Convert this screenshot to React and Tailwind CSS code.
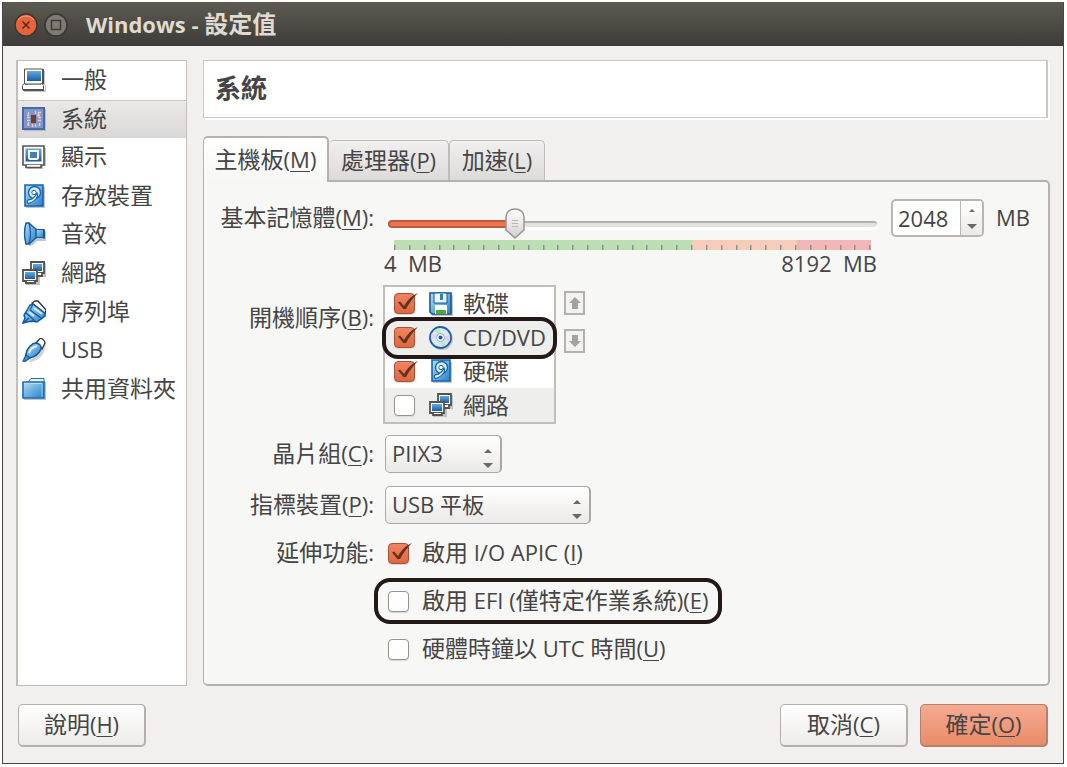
import React, { useState } from 'react';

const MIN_MEMORY = 4;
const MAX_MEMORY = 8192;

const ComputerIcon = () => (
  <svg className="h-6 w-6 shrink-0" viewBox="0 0 24 24" fill="none">
    <path d="M4 3h19v14h1v7H2v-2H23v-5h-1z" fill="#c4c4c4" />
    <path d="M2.500 1h18v15h-18z" fill="#fff" stroke="#55534f" />
    <path d="M21 1v15" stroke="#55534f" strokeWidth="2" />
    <path d="M5 3h14v10H5z" fill="url(#screenBlue)" />
    <path d="M2 15.500l-1.500 2v4h21v-4l-1.500-2-2 1H4z" fill="#fff" stroke="#55534f" />
    <path d="M1 22h21" stroke="#55534f" strokeWidth="2" />
    <path d="M5 16.500h13" stroke="#8a8883" />
  </svg>
);

const ChipIcon = () => (
  <svg className="h-6 w-6 shrink-0" viewBox="0 0 24 24" fill="none">
    <path d="M2 2h22v22H2z" fill="#b9bcc4" />
    <path d="M1 1h21v21H1z" fill="#7f97c9" stroke="#4869a5" strokeWidth="2" />
    <path d="M9 8h5v8H9z" fill="#6b4136" />
    <path
      d="M6.500 5v4M5 10.500h3M5 13.500h3M6.500 15v4M16.500 5v3M16 10.500h3M16 13.500h3M17.500 16v3M10.500 17v3M13.500 17v3M13.500 4v3M19 5.500h-3M5 8.500h2M15 8.500h3M5 17.500h2"
      stroke="#f0c9c4"
      strokeWidth="1.400"
    />
  </svg>
);

const DisplayIcon = () => (
  <svg className="h-6 w-6 shrink-0" viewBox="0 0 24 24" fill="none">
    <path d="M3 3h21v18h-3v3H5z" fill="#c4c4c4" />
    <path d="M1 1h21v19H1z" fill="#fff" stroke="#55534f" strokeWidth="1.600" />
    <path d="M3.500 3.500h16v13h-16z" fill="url(#screenBlue)" />
    <path d="M7 6h9v7l-1 1H8l-1-1z" fill="#3f7fc0" stroke="#fff" strokeWidth="2" />
    <path d="M4 20v2.500h15V20" fill="#fff" stroke="#55534f" strokeWidth="1.600" />
  </svg>
);

const DiskIcon = () => (
  <svg className="h-6 w-6 shrink-0" viewBox="0 0 24 24" fill="none">
    <path d="M4 3h19v21H4z" fill="#c4c4c4" />
    <path d="M3 1h18v21H3z" fill="url(#skyBlue)" stroke="#1464ae" strokeWidth="1.600" />
    <circle cx="12.500" cy="8.500" r="6" fill="#d9ecf9" stroke="#1464ae" strokeWidth="1.400" />
    <path d="M15 9c2 4-2 8-7 10-2 1-4-1-2-3 2-1 4 0 5-2 2-1 3-3 4-5z" fill="#e8f4fc" stroke="#1464ae" strokeWidth="1.200" />
    <circle cx="12" cy="8.500" r="2.200" fill="#fff" stroke="#1464ae" />
  </svg>
);

const SoundIcon = () => (
  <svg className="h-6 w-6 shrink-0" viewBox="0 0 24 24" fill="none">
    <path d="M5 3c5 1 7 6 9 6h10v10h-9c-3 3-5 5-8 5z" fill="#c4c4c4" />
    <path d="M13 7.500h9v8h-9z" fill="url(#skyBlue)" stroke="#14579c" />
    <path d="M22 7.500v9" stroke="#14579c" strokeWidth="2" />
    <path d="M4 1h3c2 2 4 4 7 6v9c-3 2-5 5-7 6H4c-2-7-2-14 0-21z" fill="url(#skyBlue)" stroke="#14579c" strokeWidth="1.400" />
    <path d="M7 1c2 7 2 14 0 21" stroke="#14579c" strokeWidth="1.200" />
  </svg>
);

const NetworkIcon = () => (
  <svg className="h-6 w-6 shrink-0" viewBox="0 0 24 24" fill="none">
    <path d="M10 2h14v14h-6v8H4v-3z" fill="#c4c4c4" />
    <path d="M9 1h13v11H9z" fill="#fff" stroke="#55534f" strokeWidth="1.800" />
    <path d="M11 3h9v7h-9z" fill="url(#screenBlue)" />
    <path d="M14 12v3h6v-3" fill="#fff" stroke="#55534f" strokeWidth="1.800" />
    <path d="M1 9h14v11H1z" fill="#fff" stroke="#55534f" strokeWidth="1.800" />
    <path d="M3 11h10v7H3z" fill="url(#screenBlue)" />
    <path d="M4 20v2h9v-2" fill="#fff" stroke="#55534f" strokeWidth="1.800" />
  </svg>
);

const SerialIcon = () => (
  <svg className="h-6 w-6 shrink-0" viewBox="0 0 24 24" fill="none">
    <path d="M8 24l16-10v-3l-8-8z" fill="#c4c4c4" />
    <path d="M10 3l3-2h3l8 9-1 4z" fill="#fff" stroke="#333" strokeWidth="1.300" />
    <path d="M4 12l4-7 3-1 12 9v3l-8 6-5-1-5 1-4 1 2-5-1-3z" fill="url(#skyBlue)" stroke="#14579c" strokeWidth="1.500" />
    <path d="M4 13l9 8M11 4l-3 6 11 8" stroke="#14579c" strokeWidth="1.200" />
    <path d="M12 8l8 6M7 12l5 4" stroke="#d6edfa" strokeWidth="2" />
    <path d="M1 23l6-5" stroke="#14579c" strokeWidth="1.500" />
  </svg>
);

const UsbIcon = () => (
  <svg className="h-6 w-6 shrink-0" viewBox="0 0 24 24" fill="none">
    <path d="M6 24c8 0 14-5 16-10l2-8z" fill="#d2d2d2" />
    <path d="M14 5l4-4.500c2-.500 5 2 5 4.500l-3 6z" fill="#fff" stroke="#333" strokeWidth="1.300" />
    <path d="M4 16C5 10 10 5 14 5c3 0 6 3 5 6-2 5-6 8-12 9l-3-1z" fill="url(#skyBlue)" stroke="#14579c" strokeWidth="1.500" />
    <path d="M4 17l-3 6 2 .500L8 20z" fill="#3e96d8" stroke="#14579c" strokeWidth="1.200" />
    <path d="M7 15c1-4 4-6 8-7" stroke="#e3f3fc" strokeWidth="2" />
  </svg>
);

const FolderIcon = () => (
  <svg className="h-6 w-6 shrink-0" viewBox="0 0 24 24" fill="none">
    <path d="M2 5h22v18H2z" fill="#c4c4c4" />
    <path d="M6 5l3-3.500h13v4H6z" fill="#e6f2fa" stroke="#1d6cb0" />
    <path d="M1 5h21v16H1z" fill="url(#skyBlue)" stroke="#1d6cb0" strokeWidth="1.600" />
    <path d="M20 7v13" stroke="#8ccbee" />
    <path d="M2 6.500h18" stroke="#b5dff5" />
  </svg>
);

const FloppyIcon = () => (
  <svg className="h-6 w-6 shrink-0" viewBox="0 0 24 24" fill="none">
    <path d="M2 3h22v21H3z" fill="#c4c4c4" />
    <path d="M1 1h21v21H3l-2-2z" fill="url(#skyBlue)" stroke="#14579c" strokeWidth="1.600" />
    <path d="M5 1h13v10H5z" fill="#eef5fa" stroke="#14579c" />
    <path d="M11 2h3v6h-3z" fill="#2f7fc4" />
    <path d="M6 13h12v9H6z" fill="#fff" />
    <path d="M7 18h10v4H7z" fill="#4aa83c" />
  </svg>
);

const DiscIcon = () => (
  <svg className="h-6 w-6 shrink-0" viewBox="0 0 24 24" fill="none">
    <circle cx="13" cy="13" r="11" fill="#c4c4c4" />
    <circle cx="11.500" cy="11.500" r="10.500" fill="#dbe8f6" stroke="#1d5fa8" strokeWidth="1.800" />
    <path d="M11.500 11.500L5 4.500a9.500 9.500 0 016-2.500z" fill="#bfe6c4" />
    <path d="M11.500 11.500l6.500 7a9.500 9.500 0 01-6 2.500z" fill="#c3e5cd" />
    <path d="M11.500 11.500L21 9a9.500 9.500 0 01-1 7z" fill="#e6cdea" />
    <path d="M11.500 11.500L2 13a9.500 9.500 0 011-6z" fill="#e8d3ec" />
    <circle cx="11.500" cy="11.500" r="4" fill="#fff" stroke="#7fb2df" />
    <circle cx="11.500" cy="11.500" r="2" fill="#14579c" />
  </svg>
);

const IconGradients = () => (
  <svg className="absolute h-0 w-0" aria-hidden="true">
    <defs>
      <linearGradient id="screenBlue" x1="0" y1="0" x2="0" y2="1">
        <stop offset="0" stopColor="#5fabdf" />
        <stop offset="1" stopColor="#1c5ba6" />
      </linearGradient>
      <linearGradient id="skyBlue" x1="0" y1="0" x2="1" y2="1">
        <stop offset="0" stopColor="#b4def5" />
        <stop offset="1" stopColor="#2580cc" />
      </linearGradient>
      <linearGradient id="knob" x1="0" y1="0" x2="0" y2="1">
        <stop offset="0" stopColor="#ffffff" />
        <stop offset="1" stopColor="#d2d0cd" />
      </linearGradient>
    </defs>
  </svg>
);

// Han characters are set one pixel larger than the Latin text beside them
const Mixed = ({ text }) =>
  text.split(/([\u3400-\u9fff]+)/).map((run, i) =>
    i % 2 ? (
      <span key={i} className="text-[23px]">
        {run}
      </span>
    ) : (
      run
    )
  );

// Label text followed by its keyboard shortcut, e.g. 主機板(M)
const Mnemonic = ({ text, keyName, suffix = '' }) => (
  <span className="block pb-[2px]">
    <Mixed text={text} />(<u className="decoration-1 underline-offset-[3px]">{keyName}</u>){suffix}
  </span>
);

const Highlight = ({ className }) => (
  <span className={`pointer-events-none absolute rounded-2xl border-4 border-[#231a18] ${className}`} />
);

const CheckBox = ({ defaultChecked }) => (
  <span className="relative h-[21px] w-[21px] shrink-0">
    <input
      type="checkbox"
      defaultChecked={defaultChecked}
      className="peer block h-[21px] w-[21px] appearance-none rounded-[4px] border border-[#98938e] bg-white shadow-[0_1px_1px_#d9d7d5] checked:border-[#a5513a] checked:bg-linear-to-b checked:from-[#ee8461] checked:to-[#e0673f]"
    />
    <svg className="pointer-events-none absolute -top-px left-0 hidden h-[22px] w-6 peer-checked:block" viewBox="0 0 24 22" fill="none">
      <path d="M4 10.500l2-1 4 4.500C13 9 17 4 24 1c-5 5-9 10-12 16h-2.500z" fill="#66301f" />
    </svg>
  </span>
);

const SpinArrows = () => (
  <svg className="pointer-events-none absolute right-2 bottom-[5px] h-5 w-3" viewBox="0 0 12 20">
    <path d="M2 5l4-4 4 4zM1 15h10l-5 5z" fill="#6b6966" />
  </svg>
);

const Select = ({ id, width, options }) => (
  <span className={`relative ${width}`}>
    <select
      id={id}
      className="block h-[38px] w-full appearance-none rounded-[5px] border border-r-2 border-[#aba7a2] bg-linear-to-b from-white to-[#ebe9e7] pb-[3px] pl-[6px]"
    >
      {options.map((option) => (
        <option key={option}>{option}</option>
      ))}
    </select>
    <SpinArrows />
  </span>
);

const MemorySlider = ({ value, onChange }) => {
  const ratio = (value - MIN_MEMORY) / (MAX_MEMORY - MIN_MEMORY);
  const position = `calc(10px + (100% - 20px) * ${ratio})`;
  const ticks = Array.from({ length: 33 }, (_, i) => i);

  return (
    <div className="flex-1 pt-[9px]">
      <div className="relative ml-1 h-8">
        <div className="flex h-8 items-center">
          <div className="h-[6px] flex-1 rounded-full border-t-2 border-[#b3afac] bg-[#e5e1df] shadow-[0_3px_0_#fff]" />
        </div>
        <div
          className="absolute top-3 left-0 h-2 rounded-full border-2 border-[#c05a3a] bg-[#ea7550]"
          style={{ width: position }}
        />
        <input
          id="memory"
          type="range"
          min={MIN_MEMORY}
          max={MAX_MEMORY}
          value={value}
          onChange={(e) => onChange(Number(e.target.value))}
          className="absolute inset-0 w-full appearance-none bg-transparent [&::-webkit-slider-thumb]:h-8 [&::-webkit-slider-thumb]:w-5 [&::-webkit-slider-thumb]:appearance-none"
        />
        <svg
          className="pointer-events-none absolute top-0 h-8 w-5 -translate-x-1/2"
          viewBox="0 0 20 32"
          style={{ left: position }}
        >
          <path d="M1 9c0-5 4-8 9-8s9 3 9 8v13l-9 8-9-8z" fill="url(#knob)" stroke="#989490" strokeWidth="1.500" />
          <path d="M7 12.500h6M7 15.500h6M7 18.500h6" stroke="#bab7b3" />
        </svg>
      </div>
      <svg className="mr-[6px] ml-[10px] block h-[10px] w-[calc(100%-16px)]" viewBox="0 0 477 10" preserveAspectRatio="none">
        <path d="M0 0h298v10H0z" fill="#bcdeb3" />
        <path d="M298 0h105v10H298z" fill="#f6cdba" />
        <path d="M403 0h74v10h-74z" fill="#f3b6b8" />
        {ticks.map((i) => (
          <rect key={i} x={Math.round(i * 14.85)} y="5" width="1.500" height="5" fill="#8f918c" />
        ))}
      </svg>
      <div className="flex justify-between leading-[26px] whitespace-pre">
        <span>{`${MIN_MEMORY}  MB`}</span>
        <span>{`${MAX_MEMORY}  MB`}</span>
      </div>
    </div>
  );
};

const MemorySpinBox = ({ value, onChange }) => (
  <div className="flex h-[38px] w-[93px] rounded-[5px] border-2 border-[#b9b5b1] bg-white">
    <input
      type="text"
      inputMode="numeric"
      aria-label="基本記憶體 MB"
      value={value}
      onChange={(e) => onChange(Number(e.target.value) || MIN_MEMORY)}
      className="w-[67px] bg-transparent pl-[5px] outline-none"
    />
    <div className="flex flex-1 flex-col rounded-r-[3px] border-l border-[#b9b5b1] bg-linear-to-b from-white to-[#ebe9e7]">
      <button aria-label="增加" className="flex flex-1 items-center justify-center" onClick={() => onChange(Math.min(value + 4, MAX_MEMORY))}>
        <svg className="h-1 w-2" viewBox="0 0 8 4">
          <path d="M1 4l3-3 3 3z" fill="#6b6966" />
        </svg>
      </button>
      <button aria-label="減少" className="flex flex-1 items-center justify-center" onClick={() => onChange(Math.max(value - 4, MIN_MEMORY))}>
        <svg className="h-[5px] w-[10px]" viewBox="0 0 10 5">
          <path d="M0 0h10L5 5z" fill="#6b6966" />
        </svg>
      </button>
    </div>
  </div>
);

const categories = [
  { name: '一般', Icon: ComputerIcon },
  { name: '系統', Icon: ChipIcon },
  { name: '顯示', Icon: DisplayIcon },
  { name: '存放裝置', Icon: DiskIcon },
  { name: '音效', Icon: SoundIcon },
  { name: '網路', Icon: NetworkIcon },
  { name: '序列埠', Icon: SerialIcon },
  { name: 'USB', Icon: UsbIcon },
  { name: '共用資料夾', Icon: FolderIcon },
];

const bootDevices = [
  { name: '軟碟', Icon: FloppyIcon, enabled: true },
  { name: 'CD/DVD', Icon: DiscIcon, enabled: true, highlighted: true },
  { name: '硬碟', Icon: DiskIcon, enabled: true },
  { name: '網路', Icon: NetworkIcon, enabled: false },
];

const TitleBar = () => (
  <header className="flex h-11 items-center border-t-2 border-[#5c5650] bg-linear-to-b from-[#5b5951] to-[#3d3c38] pl-[11px]">
    <button aria-label="關閉" className="h-6 w-6">
      <svg viewBox="0 0 24 24" fill="none">
        <circle cx="12" cy="12" r="11" fill="#e9633a" stroke="#393733" strokeWidth="1.500" />
        <path d="M4 7a10 10 0 0116 0" stroke="#f5a68a" />
        <path d="M8.500 8.500l7 7M15.500 8.500l-7 7" stroke="#4d2a1e" strokeWidth="1.500" />
      </svg>
    </button>
    <button aria-label="最大化" className="ml-[6px] h-6 w-6">
      <svg viewBox="0 0 24 24" fill="none">
        <circle cx="12" cy="12" r="11" fill="#7d7b74" stroke="#393733" strokeWidth="1.500" />
        <path d="M7.500 7.500h9v9h-9z" stroke="#3d3b37" strokeWidth="1.500" />
      </svg>
    </button>
    <h1 className="ml-[18px] pb-[2px] text-[22px] leading-7 font-bold text-[#dfdbd2]">
      Windows - <span className="text-2xl leading-7">設定值</span>
    </h1>
  </header>
);

const Sidebar = () => (
  <nav className="w-[171px] shrink-0 border border-l-2 border-[#c2beba] bg-white">
    <ul className="grid h-[347px] grid-rows-9">
      {categories.map(({ name, Icon }) => (
        <li
          key={name}
          className={name === '系統' ? 'border-t border-[#cdcbc9] bg-linear-to-b from-[#ebe9e8] to-[#dad8d6]' : ''}
        >
          <a href="#" className="flex h-full items-center gap-[15px] pl-1">
            <Icon />
            <span className="pb-[2px]">
              <Mixed text={name} />
            </span>
          </a>
        </li>
      ))}
    </ul>
  </nav>
);

const TabBar = () => (
  <div role="tablist" className="relative z-10 -mb-[2px] flex items-end">
    <button
      role="tab"
      aria-selected="true"
      className="h-[46px] w-[126px] rounded-t-[5px] border border-t-2 border-r-2 border-b-0 border-[#b5b1ae] bg-linear-to-b from-white to-[#f7f7f6]"
    >
      <Mnemonic text="主機板" keyName="M" />
    </button>
    <button
      role="tab"
      aria-selected="false"
      className="mb-[2px] h-10 w-[120px] rounded-t-[5px] border border-b-0 border-l-0 border-[#bfbcb9] bg-linear-to-b from-[#f1f0ef] to-[#dddbd9]"
    >
      <Mnemonic text="處理器" keyName="P" />
    </button>
    <button
      role="tab"
      aria-selected="false"
      className="mb-[2px] h-10 w-24 rounded-t-[5px] border border-b-0 border-[#bfbcb9] bg-linear-to-b from-[#f1f0ef] to-[#dddbd9]"
    >
      <Mnemonic text="加速" keyName="L" />
    </button>
  </div>
);

const BootOrder = () => (
  <div className="-ml-px flex">
    <ul className="grid h-[139px] w-[173px] grid-rows-4 border-2 border-[#c2beba] bg-white">
      {bootDevices.map(({ name, Icon, enabled, highlighted }) => (
        <li key={name} className="relative flex even:bg-[#eeeeed]">
          <label className="flex flex-1 items-center pl-[9px]">
            <CheckBox defaultChecked={enabled} />
            <span className="ml-[14px] flex">
              <Icon />
            </span>
            <span className="ml-[10px] pb-px">
              <Mixed text={name} />
            </span>
          </label>
          {highlighted && <Highlight className="-inset-x-[3px] -inset-y-[4px]" />}
        </li>
      ))}
    </ul>
    <div className="ml-2 flex flex-col gap-[14px] pt-[6px]">
      <button aria-label="上移" className="flex h-6 w-[21px] items-center justify-center border-2 border-[#b3b1ae] bg-[#f3f2f1]">
        <svg className="h-3 w-3" viewBox="0 0 12 12">
          <path d="M6 0l6 6H9v6H3V6H0z" fill="#a5a3a0" />
        </svg>
      </button>
      <button aria-label="下移" className="flex h-6 w-[21px] items-center justify-center border-2 border-[#b3b1ae] bg-[#f3f2f1]">
        <svg className="h-3 w-3" viewBox="0 0 12 12">
          <path d="M6 12l6-6H9V0H3v6H0z" fill="#a5a3a0" />
        </svg>
      </button>
    </div>
  </div>
);

const MotherboardPanel = () => {
  const [memory, setMemory] = useState(2048);

  return (
    <div className="flex flex-1 flex-col rounded-[5px] rounded-tl-none border-2 border-l border-[#b5b1ae] bg-[#f7f7f6] pt-[17px] pr-[18px] pb-5 pl-4">
      <div className="flex gap-[10px]">
        <label htmlFor="memory" className="w-[154px] shrink-0 pt-1 text-right whitespace-nowrap">
          <Mnemonic text="基本記憶體" keyName="M" suffix=":" />
        </label>
        <MemorySlider value={memory} onChange={setMemory} />
        <div className="ml-1 flex gap-3">
          <MemorySpinBox value={memory} onChange={setMemory} />
          <span className="pt-1">MB</span>
        </div>
      </div>

      <div className="mt-[9px] flex gap-[10px]">
        <div className="w-[154px] shrink-0 pt-[18px] text-right">
          <Mnemonic text="開機順序" keyName="B" suffix=":" />
        </div>
        <BootOrder />
      </div>

      <div className="mt-[11px] flex items-center gap-[11px]">
        <label htmlFor="chipset" className="w-[154px] shrink-0 text-right">
          <Mnemonic text="晶片組" keyName="C" suffix=":" />
        </label>
        <Select id="chipset" width="w-[117px]" options={['PIIX3', 'ICH9']} />
      </div>

      <div className="mt-[13px] flex items-center gap-[11px]">
        <label htmlFor="pointing" className="w-[154px] shrink-0 text-right">
          <Mnemonic text="指標裝置" keyName="P" suffix=":" />
        </label>
        <Select id="pointing" width="w-[206px]" options={['USB 平板', 'PS/2 滑鼠']} />
      </div>

      <div className="mt-[14px] flex gap-[14px]">
        <div className="w-[154px] shrink-0 text-right">
          <Mixed text="延伸功能:" />
        </div>
        <div className="flex flex-col items-start gap-[18px]">
          <label className="flex items-center gap-[13px]">
            <CheckBox defaultChecked />
            <Mnemonic text="啟用 I/O APIC " keyName="I" />
          </label>
          <label className="relative flex items-center gap-[13px]">
            <CheckBox />
            <Mnemonic text="啟用 EFI (僅特定作業系統)" keyName="E" />
            <Highlight className="-inset-x-[14px] -inset-y-2" />
          </label>
          <label className="flex items-center gap-[13px]">
            <CheckBox />
            <Mnemonic text="硬體時鐘以 UTC 時間" keyName="U" />
          </label>
        </div>
      </div>
    </div>
  );
};

const Footer = () => (
  <footer className="flex gap-3 pt-[18px] pr-[2px] pb-4 pl-[2px]">
    <button className="mr-auto h-[43px] w-32 rounded-[5px] border border-r-2 border-b-2 border-[#b3b0ab] bg-linear-to-b from-white to-[#eeecea]">
      <Mnemonic text="說明" keyName="H" />
    </button>
    <button className="h-[43px] w-32 rounded-[5px] border border-r-2 border-b-2 border-[#b3b0ab] bg-linear-to-b from-white to-[#eeecea]">
      <Mnemonic text="取消" keyName="C" />
    </button>
    <button className="h-[43px] w-32 rounded-[5px] border border-r-2 border-b-2 border-[#b5806c] bg-linear-to-b from-[#f5ab92] to-[#e98b69]">
      <Mnemonic text="確定" keyName="O" />
    </button>
  </footer>
);

const App = () => (
  <div className="flex min-h-screen flex-col bg-white pt-[2px] pr-[3px] pb-[3px] pl-[2px] font-['Open_Sans','Noto_Sans_CJK_TC',sans-serif] text-[22px] leading-7 text-[#454545]">
    <IconGradients />
    <div className="flex flex-1 flex-col border border-t-0 border-[#4a4645] bg-[#f1f0ef]">
      <TitleBar />
      <div className="flex flex-1 flex-col px-[13px] pt-[14px]">
        <div className="flex flex-1 gap-4">
          <Sidebar />
          <main className="flex flex-1 flex-col">
            <div className="mr-[2px] mb-[18px] flex h-[58px] items-center border border-r-2 border-[#c9c8c7] bg-white pl-[11px] shadow-[2px_2px_0_#fff]">
              <h2 className="pb-[2px] text-[26px] leading-8 font-bold">系統</h2>
            </div>
            <TabBar />
            <MotherboardPanel />
          </main>
        </div>
        <Footer />
      </div>
    </div>
  </div>
);

export default App;
